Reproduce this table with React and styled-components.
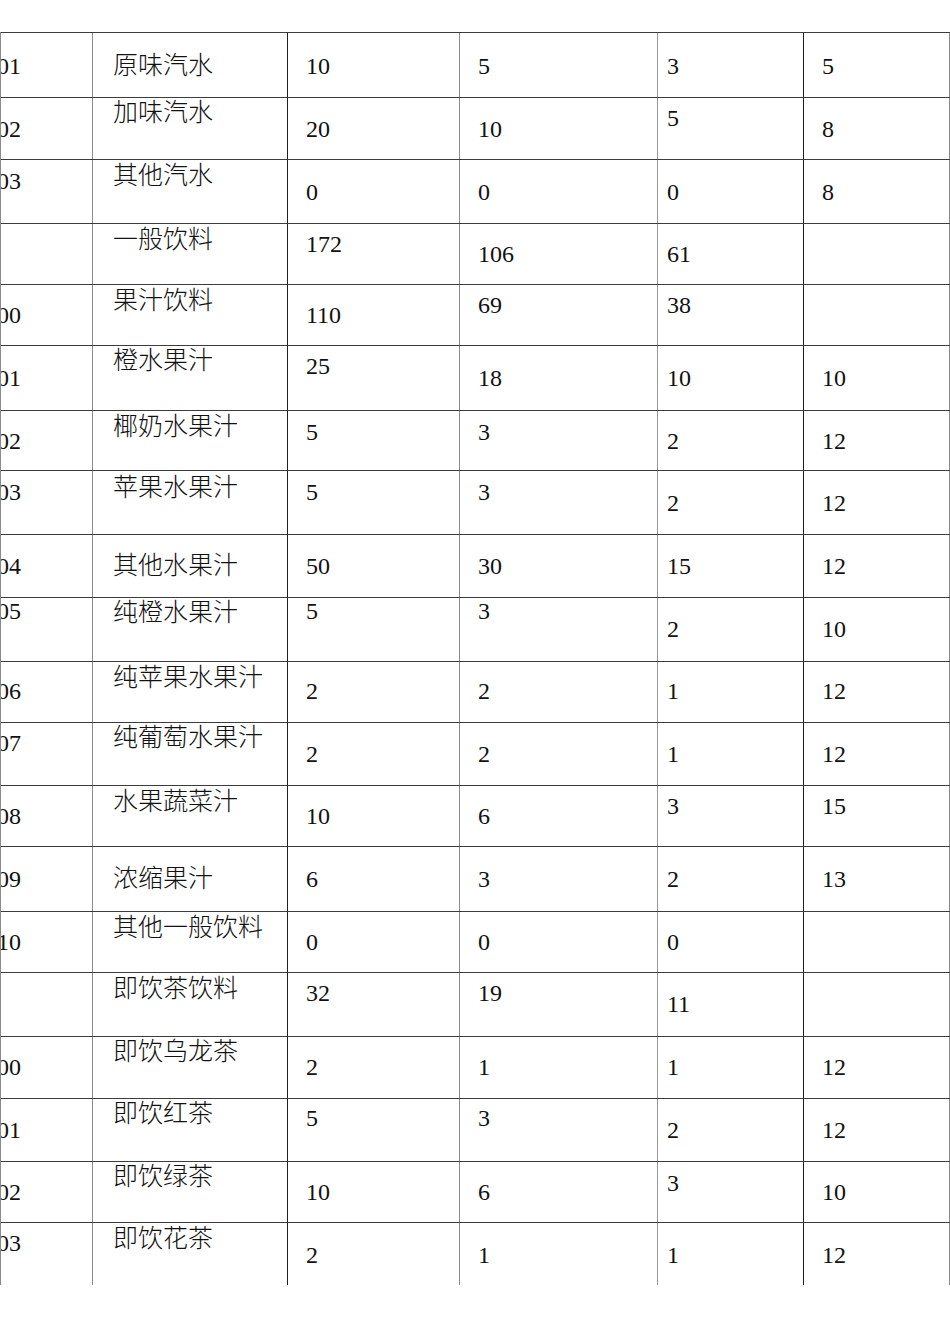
import React from "react";
import styled, { createGlobalStyle } from "styled-components";

const colors = {
  paper: "#ffffff",
  ink: "#111111",
  rule: "#3c3c3c",
  soft: "#8a8a8a",
  dark: "#1e1e1e",
};

// left edge of each column border, first col is cut off by the page edge
const colBorders = [null, colors.soft, colors.dark, colors.soft, "#9a9a9a", colors.dark];
const colPad = [73, 20, 18, 18, 9, 18];

const GlobalStyle = createGlobalStyle`
  html, body {
    margin: 0;
    padding: 0;
    background: ${colors.paper};
  }
  body {
    font-family: "Liberation Serif", "Noto Sans CJK SC", serif;
    color: ${colors.ink};
  }
`;

const Page = styled.div`
  width: 950px;
  height: 1344px;
  padding-top: 32px;
  box-sizing: border-box;
`;

const Frame = styled.div`
  overflow: hidden;
  border-left: 1px solid ${colors.soft};
`;

const Sheet = styled.div`
  margin-left: -101px;
  display: flex;
  flex-direction: column;
`;

const Row = styled.div`
  display: grid;
  grid-template-columns: 192px 195px 172px 198px 146px 147px;
  height: ${(p) => p.$h}px;
  box-sizing: border-box;
  border-top: 1px solid ${colors.rule};
`;

const Cell = styled.div`
  box-sizing: border-box;
  padding-left: ${(p) => colPad[p.$col]}px;
  border-left: ${(p) => (p.$col > 0 ? `1px solid ${colBorders[p.$col]}` : "none")};
  border-right: ${(p) => (p.$col === 5 ? `1px solid ${colors.soft}` : "none")};
  white-space: nowrap;
`;

const Text = styled.div`
  font-size: ${(p) => (p.$cjk ? 25 : 24)}px;
  font-weight: ${(p) => (p.$cjk ? 300 : 400)};
  line-height: 28px;
  margin-top: ${(p) => p.$y}px;
`;

// row top, then [text, text-center y] per column
const rows = [
  [32, ["0201", 66], ["原味汽水", 66], ["10", 66], ["5", 66], ["3", 66], ["5", 66]],
  [97, ["0202", 129], ["加味汽水", 113], ["20", 129], ["10", 129], ["5", 118], ["8", 129]],
  [159, ["0203", 181], ["其他汽水", 176], ["0", 192], ["0", 192], ["0", 192], ["8", 192]],
  [223, ["", 0], ["一般饮料", 240], ["172", 244], ["106", 254], ["61", 254], ["", 0]],
  [284, ["0300", 315], ["果汁饮料", 301], ["110", 315], ["69", 305], ["38", 305], ["", 0]],
  [345, ["0301", 378], ["橙水果汁", 361], ["25", 366], ["18", 378], ["10", 378], ["10", 378]],
  [410, ["0302", 441], ["椰奶水果汁", 427], ["5", 432], ["3", 432], ["2", 441], ["12", 441]],
  [470, ["0303", 492], ["苹果水果汁", 488], ["5", 492], ["3", 492], ["2", 503], ["12", 503]],
  [534, ["0304", 566], ["其他水果汁", 566], ["50", 566], ["30", 566], ["15", 566], ["12", 566]],
  [597, ["0305", 611], ["纯橙水果汁", 613], ["5", 611], ["3", 611], ["2", 629], ["10", 629]],
  [661, ["0306", 691], ["纯苹果水果汁", 678], ["2", 691], ["2", 691], ["1", 691], ["12", 691]],
  [722, ["0307", 743], ["纯葡萄水果汁", 738], ["2", 754], ["2", 754], ["1", 754], ["12", 754]],
  [785, ["0308", 816], ["水果蔬菜汁", 802], ["10", 816], ["6", 816], ["3", 806], ["15", 806]],
  [846, ["0309", 879], ["浓缩果汁", 879], ["6", 879], ["3", 879], ["2", 879], ["13", 879]],
  [911, ["0310", 942], ["其他一般饮料", 928], ["0", 942], ["0", 942], ["0", 942], ["", 0]],
  [972, ["", 0], ["即饮茶饮料", 989], ["32", 993], ["19", 993], ["11", 1004], ["", 0]],
  [1036, ["0400", 1067], ["即饮乌龙茶", 1052], ["2", 1067], ["1", 1067], ["1", 1067], ["12", 1067]],
  [1098, ["0401", 1130], ["即饮红茶", 1114], ["5", 1118], ["3", 1118], ["2", 1130], ["12", 1130]],
  [1161, ["0402", 1192], ["即饮绿茶", 1177], ["10", 1192], ["6", 1192], ["3", 1183], ["10", 1192]],
  [1222, ["0403", 1243], ["即饮花茶", 1239], ["2", 1255], ["1", 1255], ["1", 1255], ["12", 1255]],
];

const tableEnd = 1285;

export default function App() {
  return (
    <>
      <GlobalStyle />
      <Page>
        <Frame>
          <Sheet>
            {rows.map(([top, ...cells], i) => {
              const next = i + 1 < rows.length ? rows[i + 1][0] : tableEnd;
              return (
                <Row key={i} $h={next - top}>
                  {cells.map(([text, cy], c) => (
                    <Cell key={c} $col={c}>
                      {text && (
                        <Text $cjk={c === 1} $y={cy - top - 15}>
                          {text}
                        </Text>
                      )}
                    </Cell>
                  ))}
                </Row>
              );
            })}
          </Sheet>
        </Frame>
      </Page>
    </>
  );
}
